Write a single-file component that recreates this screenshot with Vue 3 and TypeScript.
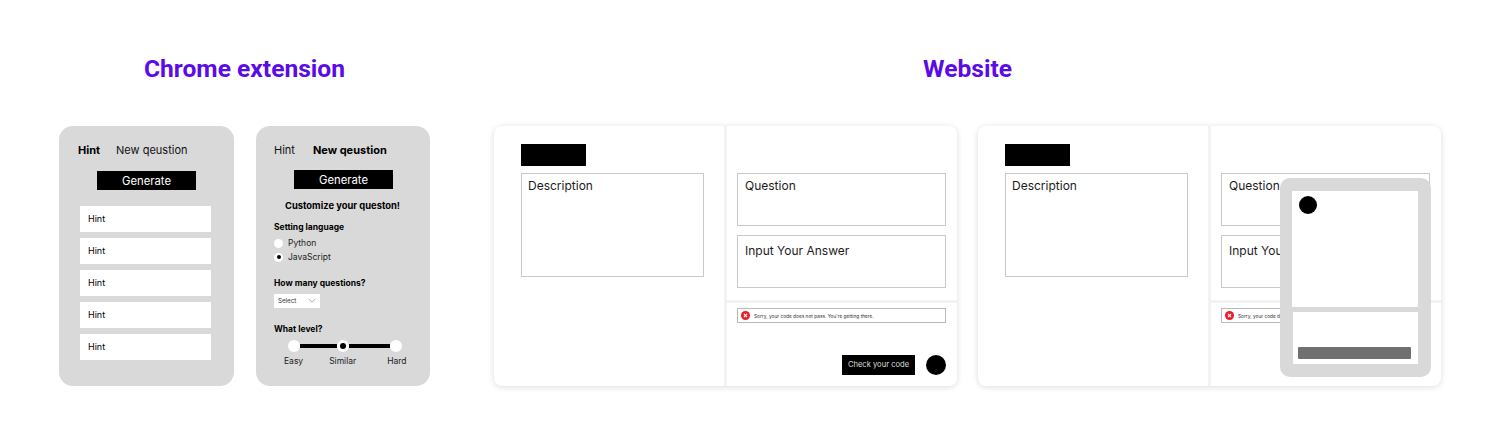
<script setup lang="ts">
const hints: string[] = ['Hint', 'Hint', 'Hint', 'Hint', 'Hint']
const sites: boolean[] = [false, true]
</script>

<template>
  <div class="page">
    <section class="group ext">
      <h1>Chrome extension</h1>
      <div class="row ext-row">
        <div class="ext-card">
          <div class="tabs first">
            <b>Hint</b>
            <span>New qeustion</span>
          </div>
          <div class="gen gen-a">Generate</div>
          <div class="hints">
            <div v-for="(h, i) in hints" :key="i" class="hint">{{ h }}</div>
          </div>
        </div>
        <div class="ext-card second">
          <div class="tabs tabs-b">
            <span>Hint</span>
            <b>New qeustion</b>
          </div>
          <div class="gen gen-b">Generate</div>
          <div class="custom">Customize your queston!</div>
          <div class="label lang">Setting language</div>
          <div class="radio r1"><i></i>Python</div>
          <div class="radio r2"><i class="on"></i>JavaScript</div>
          <div class="label many">How many questions?</div>
          <div class="select">
            <span>Select</span>
            <svg width="8" height="5" viewBox="0 0 8 5"><path d="M.5.7 4 4.2 7.5.7" fill="none" stroke="#888" stroke-width=".7" /></svg>
          </div>
          <div class="label level">What level?</div>
          <div class="slider">
            <i class="knob"></i><i class="bar b1"></i><i class="knob mid"></i><i class="bar b2"></i><i class="knob"></i>
          </div>
          <div class="ticks">
            <span>Easy</span><span class="t2">Similar</span><span class="t3">Hard</span>
          </div>
        </div>
      </div>
    </section>

    <section class="group web">
      <h1>Website</h1>
      <div class="row web-row">
        <div v-for="(popup, i) in sites" :key="i" class="site">
          <div class="pane-left">
            <div class="logo"></div>
            <div class="box desc">Description</div>
          </div>
          <div class="pane-right">
            <div class="top">
              <div class="box q">Question</div>
              <div class="box q a">Input Your Answer</div>
            </div>
            <div class="bottom">
              <div class="alert">
                <svg width="9" height="9" viewBox="0 0 9 9"><circle cx="4.5" cy="4.5" r="4.5" fill="#ee1c25" /><path d="M3 3l3 3M6 3 3 6" stroke="#fff" stroke-width="1.1" /></svg>
                <span>Sorry, your code does not pass. You're getting there.</span>
              </div>
              <div class="actions">
                <div class="check">Check your code</div>
                <div class="dot"></div>
              </div>
            </div>
          </div>
          <div v-if="popup" class="popup">
            <div class="p-top"><div class="p-dot"></div></div>
            <div class="p-bottom"><div class="p-bar"></div></div>
          </div>
        </div>
      </div>
    </section>
  </div>
</template>

<style>
html, body { margin: 0; background: #fff; }
</style>

<style scoped>
.page {
  width: 1500px;
  height: 436px;
  box-sizing: border-box;
  display: flex;
  padding: 53px 0 0 59px;
  gap: 64px;
  font-family: Inter, "Liberation Sans", sans-serif;
  color: #000;
  overflow: hidden;
}
.group { display: flex; flex-direction: column; }
h1 {
  margin: 0 0 42px;
  text-align: center;
  font: 700 24.6px/31px Roboto, sans-serif;
  color: #5b0be8;
}
.row { display: flex; }
.ext-row { gap: 22px; }
.web-row { gap: 21px; }
.ext-card {
  width: 175px;
  height: 260px;
  box-sizing: border-box;
  background: #d9d9d9;
  border-radius: 14px;
  padding: 17px 18px 0 19px;
}
.second { width: 174px; padding-left: 18px; padding-right: 0; }
.tabs { display: flex; gap: 16px; height: 15px; line-height: 15px; font-size: 11px; color: #111; }
.tabs-b { gap: 18px; }
.tabs b { font-weight: 700; color: #000; }
.gen {
  width: 99px;
  height: 19px;
  background: #000;
  color: #fff;
  line-height: 20px;
  text-align: center;
  font-size: 11.3px;
}
.gen-a { margin: 13px 0 0 19px; }
.gen-b { margin: 12px 0 0 20px; }
.hints { margin: 16px 0 0 2px; display: flex; flex-direction: column; gap: 6.5px; }
.hint {
  width: 131px;
  height: 25.5px;
  box-sizing: border-box;
  background: #fff;
  padding-left: 8px;
  line-height: 25.5px;
  font-size: 9px;
}
.custom { margin: 9.5px 0 0 11px; font-size: 9.4px; font-weight: 700; line-height: 13px; white-space: nowrap; }
.label { font-size: 8.5px; font-weight: 700; line-height: 12px; white-space: nowrap; }
.lang { margin-top: 9px; }
.radio { display: flex; align-items: center; gap: 5px; height: 12px; font-size: 8.5px; line-height: 12px; color: #222; }
.r1 { margin-top: 4.5px; }
.r2 { margin-top: 2px; }
.radio i {
  width: 9px;
  height: 9px;
  border-radius: 50%;
  background: #fff;
  display: flex;
  align-items: center;
  justify-content: center;
}
.radio i.on::after { content: ""; width: 4px; height: 4px; border-radius: 50%; background: #000; }
.many { margin-top: 14px; }
.select {
  margin-top: 5px;
  width: 46px;
  height: 13.5px;
  box-sizing: border-box;
  background: #fff;
  border-radius: 1px;
  padding: 0 4px 0 4px;
  display: flex;
  align-items: center;
  justify-content: space-between;
  font-size: 6.2px;
  color: #333;
}
.level { margin-top: 15px; }
.slider { margin: 4.5px 0 0 14px; width: 114px; height: 13px; display: flex; align-items: center; }
.knob { width: 12px; height: 12px; border-radius: 50%; background: #fff; flex: none; display: flex; align-items: center; justify-content: center; }
.knob.mid::after { content: ""; width: 6px; height: 6px; border-radius: 50%; background: #000; }
.bar { height: 4px; background: #000; flex: none; }
.b1 { width: 37px; }
.b2 { width: 41px; }
.ticks { display: flex; margin: 2.5px 0 0 10px; font-size: 8.5px; line-height: 12px; color: #222; }
.t2 { margin-left: 26px; }
.t3 { margin-left: 31px; }
.site {
  position: relative;
  width: 463px;
  height: 260px;
  display: flex;
  background: #fff;
  border-radius: 8px;
  box-shadow: 0 1px 6px rgba(0, 0, 0, .14);
}
.pane-left { width: 233px; box-sizing: border-box; padding: 18px 0 0 27px; border-right: 3px solid #f2f2f2; flex: none; }
.logo { width: 65px; height: 22px; background: #000; }
.box {
  box-sizing: border-box;
  border: 1px solid #c9c9c9;
  padding: 3.5px 7px;
  font-size: 12px;
  line-height: 16px;
  color: #1c1c1c;
}
.desc { margin-top: 7px; width: 183px; height: 104px; padding-left: 6px; }
.pane-right { flex: 1; display: flex; flex-direction: column; min-width: 0; }
.top { height: 177px; box-sizing: border-box; padding: 47px 0 0 10px; border-bottom: 3px solid #f2f2f2; flex: none; }
.q { width: 209px; height: 53px; }
.a { margin-top: 9px; padding-top: 6.5px; }
.bottom { flex: 1; padding: 5px 11px 0 10px; display: flex; flex-direction: column; }
.alert {
  height: 15px;
  box-sizing: border-box;
  border: 1px solid #b9b9b9;
  display: flex;
  align-items: center;
  gap: 4px;
  padding-left: 3px;
  font-size: 4.8px;
  color: #333;
  white-space: nowrap;
}
.alert svg { flex: none; }
.actions { display: flex; justify-content: flex-end; align-items: center; gap: 11px; margin-top: 32px; }
.check {
  width: 73px;
  height: 20px;
  background: #000;
  color: #ddd;
  font-size: 7.6px;
  line-height: 20px;
  text-align: center;
}
.dot { width: 20px; height: 20px; border-radius: 50%; background: #000; }
.popup {
  position: absolute;
  left: 302px;
  top: 52px;
  width: 151px;
  height: 199px;
  box-sizing: border-box;
  background: #d9d9d9;
  border-radius: 10px;
  padding: 13px 12px;
}
.p-top { height: 116px; width: 126px; background: #fff; padding: 5px 0 0 7px; box-sizing: border-box; }
.p-dot { width: 18px; height: 18px; border-radius: 50%; background: #000; }
.p-bottom { margin: 5px 0 0 1px; height: 52px; width: 125px; background: #fff; padding: 35px 0 0 5px; box-sizing: border-box; }
.p-bar { width: 113px; height: 12px; background: #707070; border-radius: 1px; }
</style>
